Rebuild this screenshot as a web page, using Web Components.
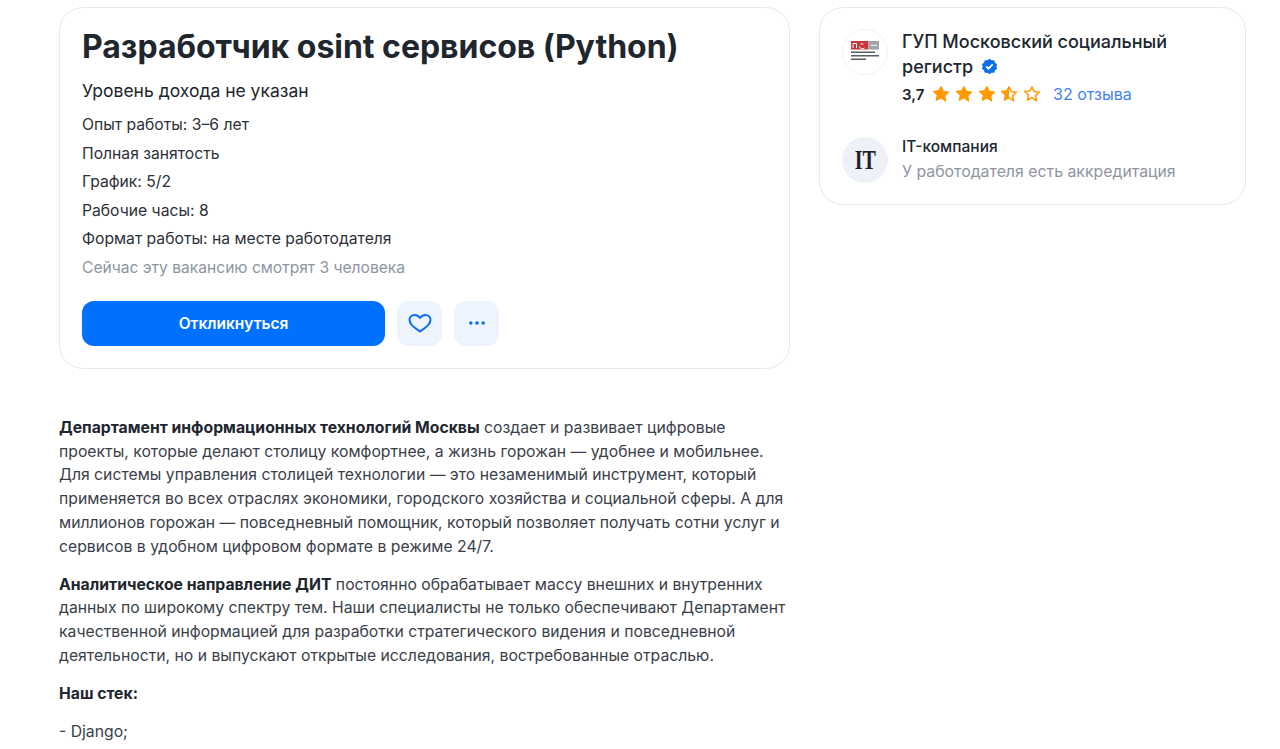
<!DOCTYPE html>
<html lang="ru">
<head>
<meta charset="utf-8">
<title>Вакансия</title>
<style>
html,body{margin:0;height:749px;overflow:hidden;background:#fff;}
body{font-family:Inter,"Noto Sans",sans-serif;color:#20262e;}
</style>
</head>
<body>
<vacancy-page>
  <vacancy-card slot="main">
    <span slot="title">Разработчик osint сервисов (Python)</span>
    <span slot="salary">Уровень дохода не указан</span>
    <div>Опыт работы: 3–6 лет</div>
    <div>Полная занятость</div>
    <div>График: 5/2</div>
    <div>Рабочие часы: 8</div>
    <div>Формат работы: на месте работодателя</div>
  </vacancy-card>
  <vacancy-text slot="main"></vacancy-text>
  <company-card slot="side"></company-card>
</vacancy-page>

<script>
class VacancyPage extends HTMLElement {
    constructor() {
        super()
        this.attachShadow({ mode: 'open' })
    }
    connectedCallback() {
        this.shadowRoot.innerHTML = `
        <style>
        :host{display:flex;gap:29px;padding:7px 0 0 59px;align-items:flex-start;}
        .main{width:731px;flex:none;}
        .side{width:427px;flex:none;}
        </style>
        <div class="main"><slot name="main"></slot></div>
        <div class="side"><slot name="side"></slot></div>
        `
    }
}

class VacancyCard extends HTMLElement {
    constructor() {
        super()
        this.attachShadow({ mode: 'open' })
    }
    connectedCallback() {
        this.shadowRoot.innerHTML = `
        <style>
        :host{display:block;box-sizing:border-box;height:362px;padding:20px 22px 0;border:1px solid #e6e9ee;border-radius:24px;}
        h1{margin:0;font-size:32px;line-height:38px;font-weight:700;color:#20262e;letter-spacing:-0.02px;}
        .salary{margin-top:13px;font-size:17.5px;line-height:24px;color:#20262e;}
        .facts{margin-top:8px;font-size:15.7px;line-height:28.6px;color:#2b3038;}
        .now{font-size:15.6px;line-height:28px;color:#8d95a1;}
        .actions{display:flex;gap:12px;margin-top:19px;}
        .apply{width:303px;height:45px;border:0;border-radius:12px;background:#0070ff;color:#fff;font:600 15.5px Inter,sans-serif;}
        .icon{width:45px;height:45px;border:0;border-radius:12px;background:#edf4fd;display:flex;align-items:center;justify-content:center;padding:0;}
        </style>
        <h1><slot name="title"></slot></h1>
        <div class="salary"><slot name="salary"></slot></div>
        <div class="facts"><slot></slot></div>
        <div class="now">Сейчас эту вакансию смотрят 3 человека</div>
        <div class="actions">
            <button class="apply">Откликнуться</button>
            <button class="icon"><svg width="24" height="24" viewBox="0 0 24 24" fill="none" stroke="#0b6fe8" stroke-width="2" stroke-linejoin="round"><path d="M12 20.500C9 18.500 1.500 14.500 1.500 8.800C1.500 5.800 4 4 6.500 4C8.800 4 10.800 5.300 12 7C13.200 5.300 15.200 4 17.500 4C20 4 22.500 5.800 22.500 8.800C22.500 14.500 15 18.500 12 20.500Z"/></svg></button>
            <button class="icon"><svg width="20" height="6" viewBox="0 0 20 6" fill="#0b6fe8"><circle cx="3.800" cy="3" r="1.800"/><circle cx="10" cy="3" r="1.800"/><circle cx="16.200" cy="3" r="1.800"/></svg></button>
        </div>
        `
    }
}

class VacancyText extends HTMLElement {
    constructor() {
        super()
        this.attachShadow({ mode: 'open' })
    }
    connectedCallback() {
        this.shadowRoot.innerHTML = `
        <style>
        :host{display:block;margin-top:47px;font-size:15.75px;line-height:23.7px;color:#3a4049;white-space:nowrap;}
        p{margin:0 0 14.5px;}
        b{font-weight:700;color:#20262e;}
        </style>
        <p><b>Департамент информационных технологий Москвы</b> создает и развивает цифровые<br>проекты, которые делают столицу комфортнее, а жизнь горожан — удобнее и мобильнее.<br>Для системы управления столицей технологии — это незаменимый инструмент, который<br>применяется во всех отраслях экономики, городского хозяйства и социальной сферы. А для<br>миллионов горожан — повседневный помощник, который позволяет получать сотни услуг и<br>сервисов в удобном цифровом формате в режиме 24/7.</p>
        <p><b>Аналитическое направление ДИТ</b> постоянно обрабатывает массу внешних и внутренних<br>данных по широкому спектру тем. Наши специалисты не только обеспечивают Департамент<br>качественной информацией для разработки стратегического видения и повседневной<br>деятельности, но и выпускают открытые исследования, востребованные отраслью.</p>
        <p><b>Наш стек:</b></p>
        <p>- Django;</p>
        `
    }
}

const star = (fill) => `<svg width="18" height="18" viewBox="0 0 24 24"><path d="M12 2.500l2.900 6.300 6.900.8-5.100 4.700 1.400 6.800L12 16.700l-6.100 3.400 1.400-6.800-5.100-4.700 6.900-.8z" fill="${fill}" stroke="#ff9900" stroke-width="2" stroke-linejoin="round"/></svg>`
const halfStar = `<svg width="18" height="18" viewBox="0 0 24 24"><path d="M12 2.500v14.200l-6.100 3.400 1.400-6.800-5.100-4.700 6.900-.8z" fill="#ff9900"/><path d="M12 2.500l2.900 6.300 6.900.8-5.100 4.700 1.400 6.800L12 16.700l-6.100 3.400 1.400-6.800-5.100-4.700 6.900-.8z" fill="none" stroke="#ff9900" stroke-width="2" stroke-linejoin="round"/></svg>`

class CompanyCard extends HTMLElement {
    constructor() {
        super()
        this.attachShadow({ mode: 'open' })
    }
    connectedCallback() {
        this.shadowRoot.innerHTML = `
        <style>
        :host{display:block;box-sizing:border-box;height:198px;padding:21px 22px 0;border:1px solid #e6e9ee;border-radius:24px;}
        .row{display:flex;gap:14px;}
        .logo{width:46px;height:46px;flex:none;box-sizing:border-box;border:1px solid #f0f1f3;border-radius:50%;display:flex;align-items:center;justify-content:center;}
        .name{font-size:18px;line-height:25px;font-weight:500;color:#20262e;width:300px;}
        .name svg{vertical-align:-2px;margin-left:3px;}
        .rating{display:flex;align-items:center;height:30px;font-size:15px;font-weight:600;}
        .stars{display:flex;gap:4.7px;margin:0 12px 0 8px;}
        .stars svg{display:block;}
        a{color:#3f7ff0;font-size:16px;font-weight:400;text-decoration:none;}
        .it{width:46px;height:46px;flex:none;border-radius:50%;background:#eef1f8;display:flex;align-items:center;justify-content:center;color:#1c2026;}
        .it span{font:700 27px "Liberation Serif",serif;transform:scaleX(.74);}
        .second{margin-top:28px;}
        .kind{font-size:15.5px;line-height:24px;font-weight:500;margin-top:-2px;}
        .acc{font-size:15.85px;line-height:25px;color:#8d95a1;}
        </style>
        <div class="row">
            <div class="logo">
                <svg width="28" height="22" viewBox="0 0 28 22">
                    <rect x="0" y="0" width="17.500" height="8.500" fill="#c8363c"/>
                    <path d="M2 7V2.500h3.500V7M9.500 3h3M8.500 5.500a3 3 0 0 0 5 1.500" fill="none" stroke="#fff" stroke-width="1"/>
                    <rect x="18" y="0" width="10" height="8.500" fill="#9fa3a8"/>
                    <path d="M20 4.300h6" stroke="#fff" stroke-width="1"/>
                    <g fill="#5a5d62">
                        <rect x="0" y="10.500" width="24" height="1.500"/>
                        <rect x="0" y="14" width="28" height="1.500"/>
                        <rect x="0" y="17.500" width="15" height="1.500"/>
                    </g>
                </svg>
            </div>
            <div>
                <div class="name">ГУП Московский социальный регистр <svg width="17" height="17" viewBox="0 0 24 24"><path d="M12 1l3 2.200 3.700-.1 1.100 3.500 3 2.200L21.600 12l1.200 3.200-3 2.200-1.100 3.500-3.700-.1L12 23l-3-2.200-3.700.1-1.100-3.500-3-2.200L2.400 12 1.200 8.800l3-2.200 1.100-3.500 3.700.1z" fill="#0b6fe8"/><path d="M7.500 12l3 3 6-6" fill="none" stroke="#fff" stroke-width="2.500"/></svg></div>
                <div class="rating">3,7<span class="stars">${star('#ff9900')}${star('#ff9900')}${star('#ff9900')}${halfStar}${star('none')}</span><a>32 отзыва</a></div>
            </div>
        </div>
        <div class="row second">
            <div class="it"><span>IT</span></div>
            <div>
                <div class="kind">IT-компания</div>
                <div class="acc">У работодателя есть аккредитация</div>
            </div>
        </div>
        `
    }
}

customElements.define('vacancy-page', VacancyPage)
customElements.define('vacancy-card', VacancyCard)
customElements.define('vacancy-text', VacancyText)
customElements.define('company-card', CompanyCard)
</script>
</body>
</html>
